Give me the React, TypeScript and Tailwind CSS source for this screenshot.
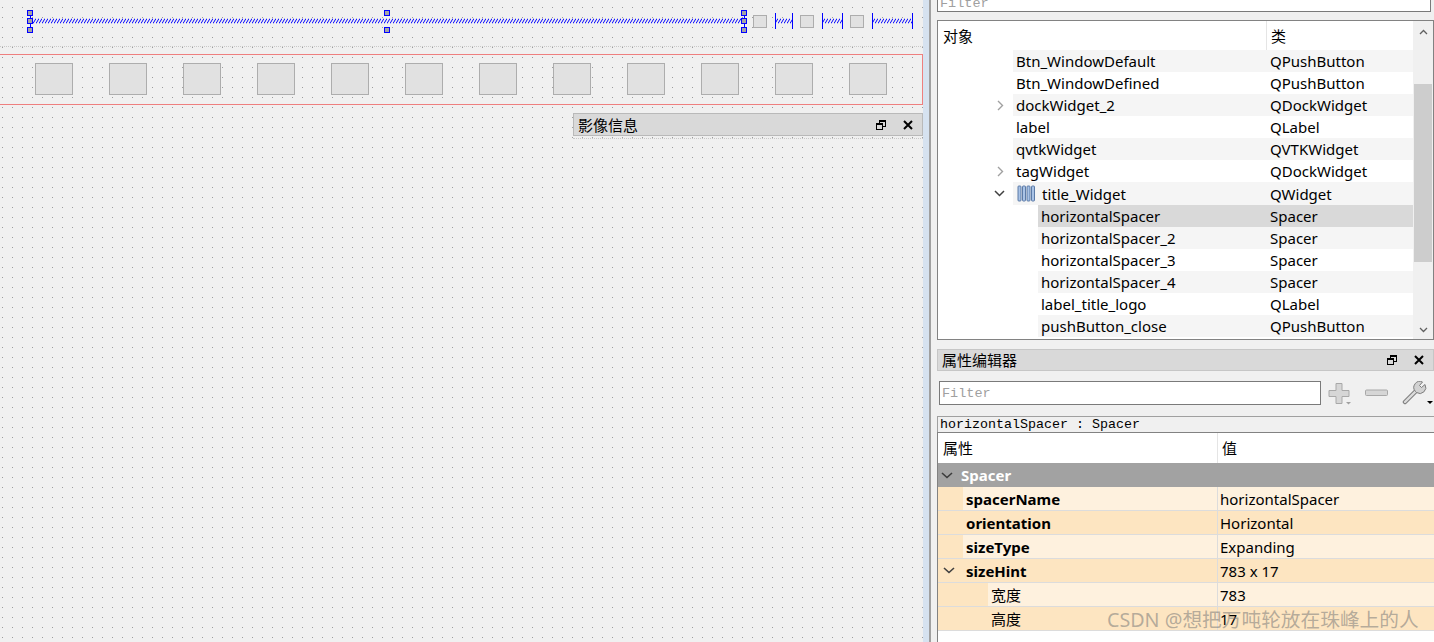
import React from "react";

const UI = "font-['Noto_Sans','Noto_Sans_CJK_SC',sans-serif]";
const MONO = "font-['Liberation_Mono','Noto_Sans_CJK_SC',monospace]";

function Zigzag({ w, id }: { w: number; id: string }) {
  return (
    <svg width={w} height={6} className="block">
      <defs>
        <pattern id={id} width="3" height="6" patternUnits="userSpaceOnUse">
          <path d="M0 5.5 L3 0.5" stroke="#0000ff" strokeWidth="1" fill="none" />
        </pattern>
      </defs>
      <rect width={w} height={6} fill={`url(#${id})`} />
    </svg>
  );
}

function Handle({ className }: { className: string }) {
  return <div className={`absolute w-[6px] h-[6px] bg-[#a4a4a4] border border-[#0000ff] ${className}`} />;
}

function SelectedSpacer() {
  return (
    <div className="relative ml-[30px] w-[715px] h-[23px] shrink-0">
      <div className="absolute left-0 top-[8px]">
        <Zigzag w={715} id="zsel" />
      </div>
      <div className="absolute left-0 top-[3px] w-px h-[17px] bg-[#0000ff]" />
      <div className="absolute right-0 top-[3px] w-px h-[17px] bg-[#0000ff]" />
      <Handle className="left-[-3px] top-0" />
      <Handle className="left-[-3px] top-[8px]" />
      <Handle className="left-[-3px] top-[17px]" />
      <Handle className="left-[354px] top-0" />
      <Handle className="left-[354px] top-[17px]" />
      <Handle className="left-[711px] top-0" />
      <Handle className="left-[711px] top-[8px]" />
      <Handle className="left-[711px] top-[17px]" />
    </div>
  );
}

function Spacer({ w, id, className }: { w: number; id: string; className: string }) {
  return (
    <div className={`relative h-[23px] shrink-0 ${className}`} style={{ width: w }}>
      <div className="absolute left-0 top-[8px]">
        <Zigzag w={w} id={id} />
      </div>
      <div className="absolute left-0 top-[3px] w-px h-[16px] bg-[#0000ff]" />
      <div className="absolute right-0 top-[3px] w-px h-[16px] bg-[#0000ff]" />
    </div>
  );
}

function FloatIcon() {
  return (
    <svg width="10" height="10" viewBox="0 0 10 10" className="block">
      <rect x="3.5" y="0.5" width="6" height="6" fill="none" stroke="#000" />
      <rect x="3" y="0" width="7" height="2" fill="#000" />
      <rect x="0.5" y="3.5" width="6" height="6" fill="#d9d9d9" stroke="#000" />
      <rect x="0" y="3" width="7" height="2" fill="#000" />
    </svg>
  );
}

function CloseIcon() {
  return (
    <svg width="10" height="10" viewBox="0 0 10 10" className="block">
      <path d="M1 1 L9 9 M9 1 L1 9" stroke="#000" strokeWidth="2" />
    </svg>
  );
}

function Canvas() {
  return (
    <div className="relative w-[923px] h-full shrink-0 overflow-hidden bg-[#f0f0f0]">
      <svg className="absolute inset-0" width="923" height="642">
        <defs>
          <pattern id="grid" x="2" y="7" width="10" height="10" patternUnits="userSpaceOnUse">
            <rect width="1" height="1" fill="#9c9c9c" />
          </pattern>
        </defs>
        <rect width="923" height="642" fill="url(#grid)" />
      </svg>
      <div className="relative flex flex-col">
        <div className="flex mt-[10px] h-[23px]">
          <SelectedSpacer />
          <div className="ml-[8px] mt-[5px] w-[14px] h-[13px] shrink-0 border border-[#adadad] bg-[#e1e1e1]" />
          <Spacer w={18} id="z2" className="ml-[8px]" />
          <div className="ml-[7px] mt-[5px] w-[14px] h-[13px] shrink-0 border border-[#adadad] bg-[#e1e1e1]" />
          <Spacer w={21} id="z3" className="ml-[8px]" />
          <div className="ml-[7px] mt-[5px] w-[14px] h-[13px] shrink-0 border border-[#adadad] bg-[#e1e1e1]" />
          <Spacer w={41} id="z4" className="ml-[8px]" />
        </div>
        <div className="mt-[13px] h-0 border-t border-dotted border-[#c8c8c8]" />
        <div className="mt-[7px] -ml-[2px] w-[925px] h-[51px] border border-[#ee7f7f] flex gap-[36px] pl-[36px] pt-[8px]">
          {Array.from({ length: 12 }).map((_, i) => (
            <div key={i} className="w-[38px] h-[32px] shrink-0 border border-[#adadad] bg-[#e1e1e1]" />
          ))}
        </div>
        <div className="mt-[8px] ml-[573px] w-[350px] h-[23px] bg-[#d9d9d9] border border-[#b9b9b9] flex items-center pl-[4px]">
          <span className="text-[15px] leading-[20px] text-black">影像信息</span>
          <div className="ml-auto flex items-center gap-[17px] pr-[9px]">
            <FloatIcon />
            <CloseIcon />
          </div>
        </div>
        <div className="mt-[2px] ml-[573px] w-[350px] h-0 border-t border-dotted border-[#c8c8c8]" />
      </div>
    </div>
  );
}

type Row = {
  name: string;
  cls: string;
  lvl: number;
  arrow?: "right" | "down";
  icon?: boolean;
  sel?: boolean;
  tall?: boolean;
};

const rows: Row[] = [
  { name: "Btn_WindowDefault", cls: "QPushButton", lvl: 1 },
  { name: "Btn_WindowDefined", cls: "QPushButton", lvl: 1 },
  { name: "dockWidget_2", cls: "QDockWidget", lvl: 1, arrow: "right" },
  { name: "label", cls: "QLabel", lvl: 1 },
  { name: "qvtkWidget", cls: "QVTKWidget", lvl: 1 },
  { name: "tagWidget", cls: "QDockWidget", lvl: 1, arrow: "right" },
  { name: "title_Widget", cls: "QWidget", lvl: 1, arrow: "down", icon: true, tall: true },
  { name: "horizontalSpacer", cls: "Spacer", lvl: 2, sel: true },
  { name: "horizontalSpacer_2", cls: "Spacer", lvl: 2 },
  { name: "horizontalSpacer_3", cls: "Spacer", lvl: 2 },
  { name: "horizontalSpacer_4", cls: "Spacer", lvl: 2 },
  { name: "label_title_logo", cls: "QLabel", lvl: 2 },
  { name: "pushButton_close", cls: "QPushButton", lvl: 2 },
];

function LayoutIcon() {
  return (
    <svg width="18" height="17" viewBox="0 0 18 17" className="block mr-[7px] shrink-0">
      {[1, 5.5, 10, 14.5].map((x, i) => (
        <rect key={i} x={x} y="1" width="3" height="15" rx="0.8" fill="#a9c3e6" stroke="#4f6f9f" strokeWidth="0.9" />
      ))}
    </svg>
  );
}

function TreeRow({ r, i }: { r: Row; i: number }) {
  const bg = r.sel ? "bg-[#d9d9d9]" : i % 2 === 0 ? "bg-[#f5f5f5]" : "bg-white";
  const indent = r.lvl === 1 ? "w-[75px]" : "w-[100px]";
  const nameW = r.lvl === 1 ? "w-[254px]" : "w-[229px]";
  return (
    <div className={`flex ${r.tall ? "h-[23px]" : "h-[22px]"}`}>
      <div className={`${indent} shrink-0 flex items-center`}>
        {r.arrow === "right" && (
          <svg width="7" height="11" viewBox="0 0 7 11" className="ml-[59px] block">
            <path d="M1 1 L5.5 5.5 L1 10" stroke="#a0a0a0" strokeWidth="1.4" fill="none" />
          </svg>
        )}
        {r.arrow === "down" && (
          <svg width="11" height="7" viewBox="0 0 11 7" className="ml-[56px] block">
            <path d="M1 1 L5.5 5.5 L10 1" stroke="#404040" strokeWidth="1.5" fill="none" />
          </svg>
        )}
      </div>
      <div className={`flex-1 flex items-center ${bg}`}>
        <div className={`${nameW} shrink-0 flex items-center ${r.icon ? "pl-[4px]" : "pl-[3px]"}`}>
          {r.icon && <LayoutIcon />}
          <span className="text-[15px] leading-[20px] text-black whitespace-nowrap">{r.name}</span>
        </div>
        <span className="pl-[3px] text-[15px] leading-[20px] text-black whitespace-nowrap">{r.cls}</span>
      </div>
    </div>
  );
}

type Prop = { name: string; val: string; dark: boolean; lvl: number; chevron?: boolean };

const props: Prop[] = [
  { name: "spacerName", val: "horizontalSpacer", dark: false, lvl: 1 },
  { name: "orientation", val: "Horizontal", dark: true, lvl: 1 },
  { name: "sizeType", val: "Expanding", dark: false, lvl: 1 },
  { name: "sizeHint", val: "783 x 17", dark: true, lvl: 1, chevron: true },
  { name: "宽度", val: "783", dark: false, lvl: 2 },
  { name: "高度", val: "17", dark: true, lvl: 2 },
];

function Chevron({ color }: { color: string }) {
  return (
    <svg width="12" height="7" viewBox="0 0 12 7" className="block">
      <path d="M1 1 L6 5.5 L11 1" stroke={color} strokeWidth="1.6" fill="none" />
    </svg>
  );
}

function PropRow({ p }: { p: Prop }) {
  const bg = p.dark ? "bg-[#fde5c1]" : "bg-[#fef1de]";
  return (
    <div className="flex h-[24px] border-b border-[#dcdcdc]">
      <div className="w-[279px] shrink-0 flex">
        <div className={`${p.lvl === 1 ? "w-[25px]" : "w-[50px]"} shrink-0 bg-[#fde5c1] flex items-center`}>
          {p.chevron && (
            <div className="ml-[5px]">
              <Chevron color="#404040" />
            </div>
          )}
        </div>
        <div className={`flex-1 flex items-center pl-[3px] ${bg}`}>
          <span className={`text-[15px] leading-[20px] text-black whitespace-nowrap ${p.lvl === 1 ? "font-bold" : ""}`}>
            {p.name}
          </span>
        </div>
      </div>
      <div className="w-px bg-[#dcdcdc] shrink-0" />
      <div className={`flex-1 flex items-center pl-[2px] ${bg}`}>
        <span className="text-[15px] leading-[20px] text-black whitespace-nowrap">{p.val}</span>
      </div>
    </div>
  );
}

function PlusIcon() {
  return (
    <svg width="24" height="23" viewBox="0 0 24 23" className="block">
      <path d="M8 1.5 h6 v7 h7 v6 h-7 v7 h-6 v-7 h-7 v-6 h7 z" fill="#d6d6d6" stroke="#a8a8a8" strokeWidth="1" />
      <path d="M18 20 h5 l-2.5 2.5 z" fill="#a0a0a0" />
    </svg>
  );
}

function MinusIcon() {
  return (
    <svg width="24" height="8" viewBox="0 0 24 8" className="block">
      <rect x="0.5" y="1" width="22" height="5.5" rx="1" fill="#d6d6d6" stroke="#a8a8a8" strokeWidth="1" />
    </svg>
  );
}

function WrenchIcon() {
  return (
    <svg width="31" height="24" viewBox="0 0 31 24" className="block">
      <path d="M3 21 L15 9" stroke="#7d7d7d" strokeWidth="4.5" strokeLinecap="round" />
      <path d="M3 21 L15 9" stroke="#dcdcdc" strokeWidth="2.4" strokeLinecap="round" />
      <path
        d="M13.5 10.5 A6 6 0 0 1 20.5 1 L17.5 4.5 L19.5 6.5 L23 3.5 A6 6 0 0 1 14.5 11.5 Z"
        fill="#d2d2d2"
        stroke="#7d7d7d"
        strokeWidth="1"
      />
      <path d="M25 20 h6 l-3 3 z" fill="#000" />
    </svg>
  );
}

function RightPanel() {
  return (
    <div className="w-[503px] h-full shrink-0 flex flex-col pl-[6px] bg-[#f0f0f0]">
      <div className="-mt-[12px] h-[24px] w-[494px] shrink-0 bg-white border border-[#7a7a7a] flex items-end pl-[2px]">
        <span className={`${MONO} text-[13.5px] leading-[15px] text-[#a0a0a0]`}>Filter</span>
      </div>
      <div className="mt-[8px] h-[320px] w-[497px] shrink-0 border border-[#828282] bg-white flex overflow-hidden">
        <div className="flex-1 flex flex-col">
          <div className="h-[29px] shrink-0 flex bg-white">
            <div className="w-[329px] shrink-0 border-r border-[#e5e5e5] flex items-center pl-[5px]">
              <span className="text-[15px] leading-[20px] text-black">对象</span>
            </div>
            <div className="flex-1 flex items-center pl-[4px]">
              <span className="text-[15px] leading-[20px] text-black">类</span>
            </div>
          </div>
          {rows.map((r, i) => (
            <TreeRow key={r.name} r={r} i={i} />
          ))}
        </div>
        <div className="w-[20px] shrink-0 bg-[#f0f0f0] flex flex-col">
          <div className="h-[17px] flex items-end justify-center pb-[3px]">
            <svg width="9" height="6" viewBox="0 0 9 6" className="block">
              <path d="M1 5 L4.5 1.5 L8 5" stroke="#606060" strokeWidth="1.3" fill="none" />
            </svg>
          </div>
          <div className="flex-1 px-[1px] pt-[46px]">
            <div className="h-[178px] bg-[#cdcdcd]" />
          </div>
          <div className="h-[17px] flex items-start justify-center pt-[5px]">
            <svg width="9" height="6" viewBox="0 0 9 6" className="block">
              <path d="M1 1 L4.5 4.5 L8 1" stroke="#606060" strokeWidth="1.3" fill="none" />
            </svg>
          </div>
        </div>
      </div>
      <div className="mt-[9px] h-[22px] w-[497px] shrink-0 bg-[#d9d9d9] border border-[#c6c6c6] flex items-center pl-[4px]">
        <span className="text-[15px] leading-[20px] text-black">属性编辑器</span>
        <div className="ml-auto flex items-center gap-[17px] pr-[9px]">
          <FloatIcon />
          <CloseIcon />
        </div>
      </div>
      <div className="mt-[10px] h-[24px] shrink-0 flex items-center">
        <div className="ml-[2px] w-[382px] h-[24px] shrink-0 bg-white border border-[#7a7a7a] flex items-center pl-[2px]">
          <span className={`${MONO} text-[13.5px] leading-[15px] text-[#a0a0a0]`}>Filter</span>
        </div>
        <div className="ml-[7px]">
          <PlusIcon />
        </div>
        <div className="ml-[13px]">
          <MinusIcon />
        </div>
        <div className="ml-[13px]">
          <WrenchIcon />
        </div>
      </div>
      <div className="mt-[11px] h-[16px] shrink-0 border-t border-l border-[#a0a0a0] flex items-center pl-[2px]">
        <span className={`${MONO} text-[13.33px] leading-[15px] text-black whitespace-pre`}>horizontalSpacer : Spacer</span>
      </div>
      <div className="flex-1 border-t border-l border-[#828282] bg-white flex flex-col">
        <div className="h-[30px] shrink-0 flex bg-white">
          <div className="w-[279px] shrink-0 flex items-center pl-[5px]">
            <span className="text-[15px] leading-[20px] text-black">属性</span>
          </div>
          <div className="w-px bg-[#e5e5e5] shrink-0" />
          <div className="flex-1 flex items-center pl-[4px]">
            <span className="text-[15px] leading-[20px] text-black">值</span>
          </div>
        </div>
        <div className="h-[24px] shrink-0 bg-[#a2a2a2] flex items-center">
          <div className="ml-[3px]">
            <Chevron color="#3c3c3c" />
          </div>
          <span className="ml-[8px] text-[15px] leading-[20px] text-white font-bold">Spacer</span>
        </div>
        {props.map((p) => (
          <PropRow key={p.name} p={p} />
        ))}
      </div>
    </div>
  );
}

export default function App() {
  return (
    <div className={`relative w-[1434px] h-[642px] overflow-hidden flex bg-[#f0f0f0] ${UI}`}>
      <Canvas />
      <div className="w-[6px] h-full shrink-0 bg-[#d6e2f0]" />
      <div className="w-[2px] h-full shrink-0 bg-[#a0a0a0]" />
      <RightPanel />
      <div className="absolute left-[1107px] top-[607px] text-[19.7px] leading-[26px] text-[rgba(120,120,120,0.55)] whitespace-nowrap pointer-events-none">
        CSDN @想把万吨轮放在珠峰上的人
      </div>
    </div>
  );
}
